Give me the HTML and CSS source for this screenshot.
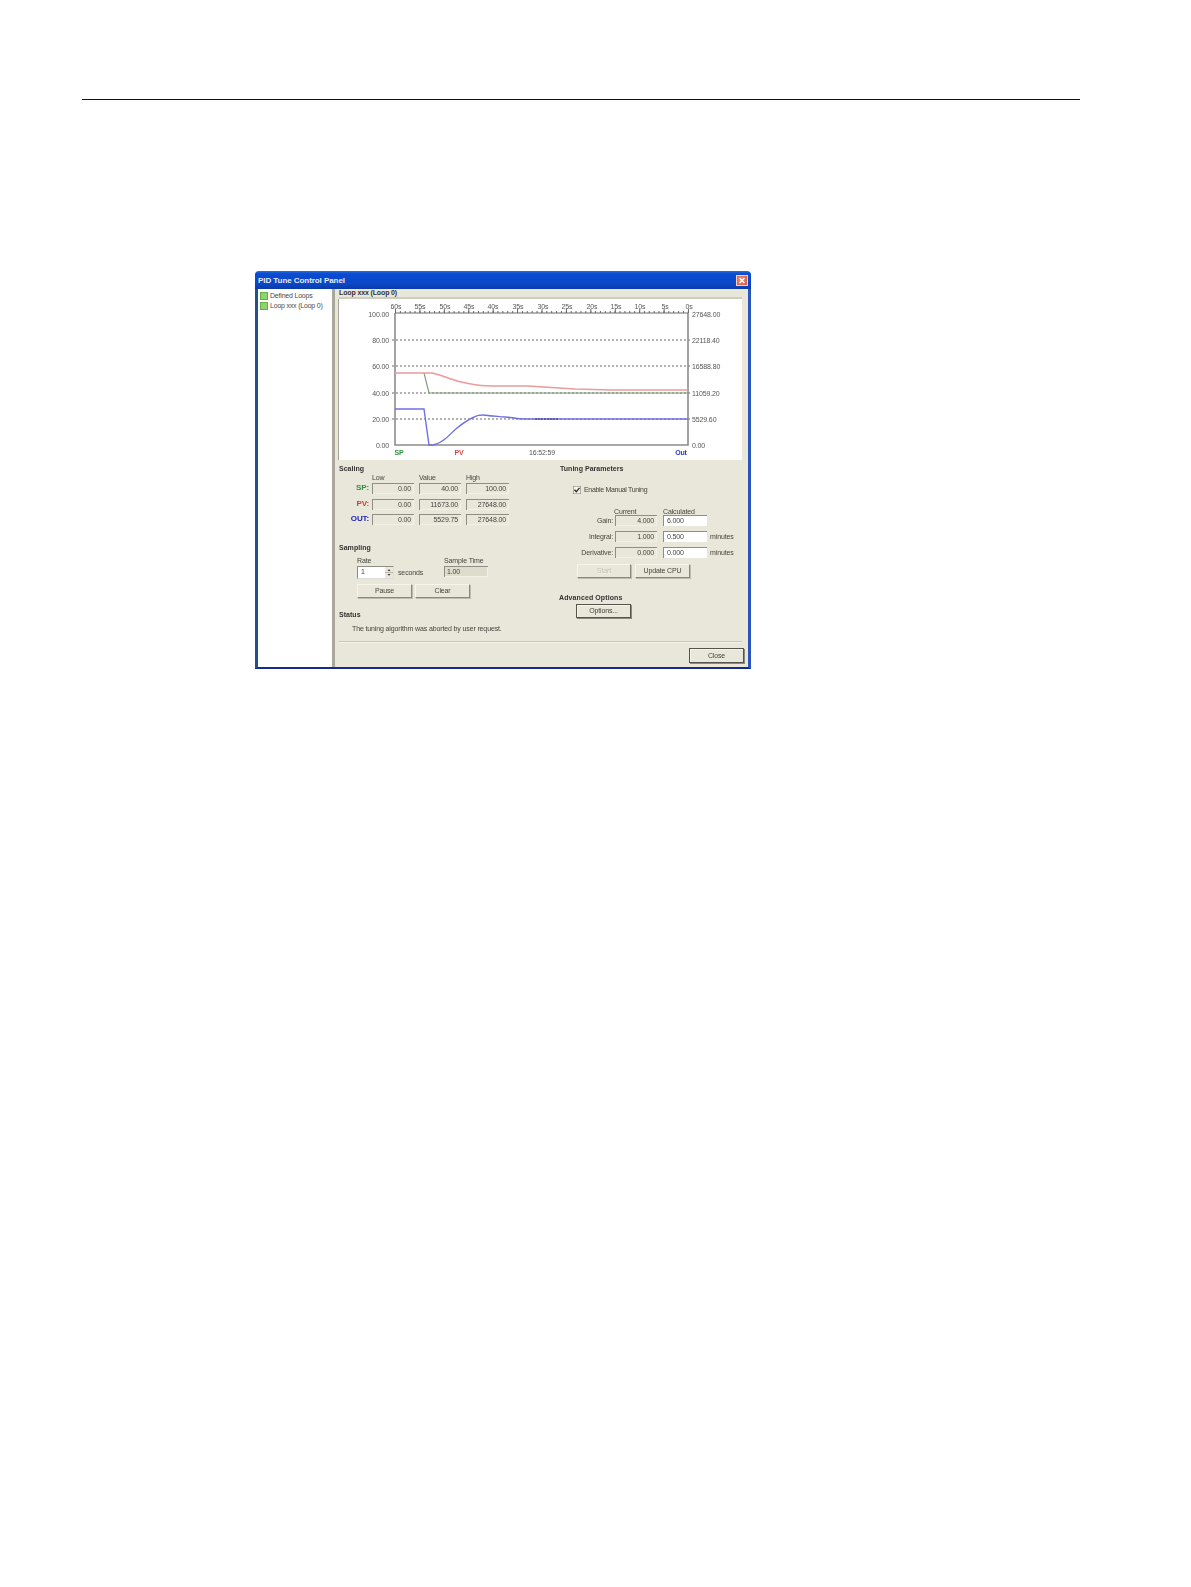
FILE: index.html
```
<!DOCTYPE html>
<html lang="en">
<head>
<meta charset="utf-8">
<title>PID Tune Control Panel</title>
<link rel="stylesheet" href="styles.css">
</head>
<body>
<div class="rule"></div>
<div class="window">
  <div class="titlebar">
    <span class="title-text">PID Tune Control Panel</span>
    <span class="close-x">
      <svg viewBox="0 0 12 11" width="12" height="11"><path d="M3 2.5 9 8.5M9 2.5 3 8.5" stroke="#fff" stroke-width="1.8" fill="none"/></svg>
    </span>
  </div>
  <div class="client">
    <div class="tree">
      <div class="tree-item"><i class="tree-icon"></i><span>Defined Loops</span></div>
      <div class="tree-item"><i class="tree-icon"></i><span>Loop xxx (Loop 0)</span></div>
    </div>
    <div class="main">
      <div class="loop-title">Loop xxx (Loop 0)</div>
      <div class="chart">
        <svg viewBox="0 0 403 161" width="403" height="161">
          <g class="grid-lines">
            <line x1="53" y1="41" x2="352" y2="41"/>
            <line x1="53" y1="67" x2="352" y2="67"/>
            <line x1="53" y1="94" x2="352" y2="94"/>
            <line x1="53" y1="120" x2="352" y2="120"/>
          </g>
          <line class="tick-minor" x1="56" y1="13" x2="349" y2="13"/>
          <line class="tick-major" x1="56" y1="12" x2="350" y2="12"/>
          <path class="axis-sides" d="M56 14V146H349V14"/>
          <path class="axis-top" d="M56 14H349"/>
          <path class="line-sp" d="M85 74 90 94H349"/>
          <path class="line-pv" d="M56 74H93C103 76 110 80 118 82S131 85 138 86 152 87 161 87H189L236 90 273 91H349"/>
          <path class="line-out" d="M56 110H85L90 146H94C99 145 102 143 106 140S113 133 118 129 127 122 133 119 140 116 144 116 150 117 154 117 160 118 166 118 176 120 186 120H349"/>
          <line class="blue-dots" x1="196" y1="120" x2="220" y2="120"/>
          <g class="top-labels">
            <text x="57" y="10">60s</text><text x="81" y="10">55s</text><text x="106" y="10">50s</text>
            <text x="130" y="10">45s</text><text x="154" y="10">40s</text><text x="179" y="10">35s</text>
            <text x="204" y="10">30s</text><text x="228" y="10">25s</text><text x="253" y="10">20s</text>
            <text x="277" y="10">15s</text><text x="301" y="10">10s</text><text x="326" y="10">5s</text>
            <text x="350" y="10">0s</text>
          </g>
          <g class="left-labels">
            <text x="50" y="17.5">100.00</text><text x="50" y="43.5">80.00</text><text x="50" y="69.5">60.00</text>
            <text x="50" y="96.5">40.00</text><text x="50" y="122.5">20.00</text><text x="50" y="148.5">0.00</text>
          </g>
          <g class="right-labels">
            <text x="353" y="17.5">27648.00</text><text x="353" y="43.5">22118.40</text><text x="353" y="69.5">16588.80</text>
            <text x="353" y="96.5">11059.20</text><text x="353" y="122.5">5529.60</text><text x="353" y="148.5">0.00</text>
          </g>
          <text class="legend legend-sp" x="60" y="156">SP</text>
          <text class="legend legend-pv" x="120" y="156">PV</text>
          <text class="legend-time" x="203" y="156">16:52:59</text>
          <text class="legend legend-out" x="342" y="156">Out</text>
        </svg>
      </div>
      <div class="panels">
        <div class="panel-left">
          <div class="section-title">Scaling</div>
          <div class="scale-grid scale-head">
            <span></span><span>Low</span><span>Value</span><span>High</span>
          </div>
          <div class="scale-grid">
            <span class="row-label sp">SP:</span><span class="field">0.00</span><span class="field">40.00</span><span class="field">100.00</span>
            <span class="row-label pv">PV:</span><span class="field">0.00</span><span class="field">11673.00</span><span class="field">27648.00</span>
            <span class="row-label out">OUT:</span><span class="field">0.00</span><span class="field">5529.75</span><span class="field">27648.00</span>
          </div>
          <div class="section-title sampling-title">Sampling</div>
          <div class="sampling">
            <div class="rate-col">
              <div class="small-label">Rate</div>
              <div class="rate-row">
                <div class="spinner">
                  <span class="spinner-value">1</span>
                  <span class="spin-btns">
                    <svg viewBox="0 0 8 11" width="8" height="11"><path d="M0 5.5H8" stroke="#aaa89a" stroke-width=".8"/><path d="M2.5 4 4 2.3 5.5 4ZM2.5 7 4 8.7 5.5 7Z" fill="#333"/></svg>
                  </span>
                </div>
                <span class="seconds">seconds</span>
              </div>
            </div>
            <div class="sample-col">
              <div class="small-label">Sample Time</div>
              <span class="field field-left sample-field">1.00</span>
            </div>
          </div>
          <div class="btn-row sampling-btns">
            <button class="btn btn-55" type="button">Pause</button>
            <button class="btn btn-55" type="button">Clear</button>
          </div>
          <div class="section-title status-title">Status</div>
          <div class="status-msg">The tuning algorithm was aborted by user request.</div>
        </div>
        <div class="panel-right">
          <div class="section-title">Tuning Parameters</div>
          <label class="check-row"><i class="checkbox"><svg viewBox="0 0 8 8" width="8" height="8"><path d="M1.5 3.8 3.3 5.8 6.5 1.8" stroke="#222" stroke-width="1.3" fill="none"/></svg></i><span>Enable Manual Tuning</span></label>
          <div class="tune-grid tune-head">
            <span></span><span>Current</span><span>Calculated</span><span></span>
          </div>
          <div class="tune-grid">
            <span class="tune-label">Gain:</span><span class="field tune-cur">4.000</span><span class="field field-left field-white">6.000</span><span></span>
            <span class="tune-label">Integral:</span><span class="field tune-cur">1.000</span><span class="field field-left field-white">0.500</span><span>minutes</span>
            <span class="tune-label">Derivative:</span><span class="field tune-cur">0.000</span><span class="field field-left field-white">0.000</span><span>minutes</span>
          </div>
          <div class="btn-row tune-btns">
            <button class="btn btn-54 btn-disabled" type="button">Start</button>
            <button class="btn btn-55" type="button">Update CPU</button>
          </div>
          <div class="section-title advanced-title">Advanced Options</div>
          <button class="btn btn-55 btn-default options-btn" type="button">Options...</button>
        </div>
      </div>
      <div class="separator"></div>
      <div class="footer"><button class="btn btn-close btn-default" type="button">Close</button></div>
    </div>
  </div>
</div>
</body>
</html>
```
FILE: styles.css
```
html, body { margin: 0; padding: 0; background: #fff; }
body { height: 1587px; overflow: hidden; font-family: "Liberation Sans", Arial, sans-serif; font-size: 7px; letter-spacing: -.13px; color: #45453f; }

.rule { height: 1.2px; margin: 99px 111px 0 82px; background: #111; }

.window {
  width: 496px; height: 398px; margin: 170.8px 0 0 255px;
  border-radius: 4px 4px 0 0; overflow: hidden; filter: blur(.45px);
  display: flex; flex-direction: column;
}
.titlebar {
  height: 18px; flex: none; display: flex; align-items: center; justify-content: space-between;
  padding: 1px 3px 0 3px; box-sizing: border-box;
  background: linear-gradient(#2a6fe0 0, #0a4bd0 15%, #0a48c8 70%, #0a3aa8 100%);
}
.title-text { color: #e6eaf8; font-size: 8px; font-weight: bold; letter-spacing: -.06px; }
.close-x {
  width: 12px; height: 11px; display: block; line-height: 0; border: .5px solid #f0d0c8;
  background: radial-gradient(circle at 40% 40%, #ec8a70, #d8553f);
  box-sizing: border-box;
}
.close-x svg { display: block; width: 100%; height: 100%; }

.client {
  flex: none; height: 380px; display: flex; box-sizing: border-box;
  border-left: 3px solid #24508f; border-right: 3px solid #2a55c0; border-bottom: 2.5px solid #1a2a8a;
}
.tree {
  flex: none; background: #fff; padding-top: 2px; box-sizing: border-box;
  border-right: 3px solid #a9a89a; width: 77px;
}
.tree-item { height: 10px; display: flex; align-items: center; padding-left: 2px; gap: 2px; color: #4a4a48; white-space: nowrap; letter-spacing: -.2px; }
.tree-icon { width: 6px; height: 6px; flex: none; background: #8ed46e; border: .5px solid #66ae4c; box-sizing: content-box; }

.main { flex: 1; background: #e9e7d9; padding-left: 4px; min-width: 0; display: flex; flex-direction: column; }
.loop-title { height: 10px; line-height: 8px; font-weight: bold; flex: none; color: #333; }
.chart { width: 403px; height: 161px; flex: none; background: #fff; box-shadow: 0 -2px 0 #cfcdbc, -1px 0 0 #a5a498; }
.chart svg { display: block; }

.axis-sides { fill: none; stroke: #8c8c8a; stroke-width: 1.6; }
.axis-top { fill: none; stroke: #6a6a68; stroke-width: 1; }
.grid-lines line { stroke: #555; stroke-width: .9; stroke-dasharray: 2 2; }
.tick-minor { stroke: #666; stroke-width: 2; stroke-dasharray: 1 3.88; }
.tick-major { stroke: #666; stroke-width: 4; stroke-dasharray: 1 23.42; }
.line-sp { fill: none; stroke: #7c9a7c; stroke-width: 1.1; }
.line-pv { fill: none; stroke: #ec9a9a; stroke-width: 1.6; }
.line-out { fill: none; stroke: #7070e4; stroke-width: 1.4; }
.blue-dots { stroke: #33336a; stroke-width: 1; stroke-dasharray: 2 1; }
.chart text { font-size: 7px; fill: #555; }
.top-labels text { text-anchor: middle; }
.left-labels text { text-anchor: end; }
.legend { font-weight: bold; text-anchor: middle; }
.chart .legend-sp { fill: #2f8f3f; }
.chart .legend-pv { fill: #d84a4a; }
.chart .legend-out { fill: #2a38c8; }
.legend-time { text-anchor: middle; }

.panels { height: 181px; flex: none; display: flex; padding-top: 4px; box-sizing: border-box; }
.panel-left { width: 221px; flex: none; }
.panel-right { flex: 1; }
.section-title { height: 10px; line-height: 10px; font-weight: bold; color: #333; white-space: nowrap; letter-spacing: .03px; }

.scale-grid { display: grid; grid-template-columns: 28px 42px 42px 43px; column-gap: 5px; row-gap: 4.5px; }
.scale-head { height: 8px; line-height: 8px; margin-bottom: 1.5px; }
.row-label { font-size: 8px; font-weight: bold; line-height: 10px; text-align: right; margin-right: -2px; }
.sp { color: #2f8f3f; }
.pv { color: #d23a3a; }
.out { color: #2222bb; }

.field {
  display: block; height: 11px; line-height: 10px; box-sizing: border-box; padding: 0 3px; text-align: right;
  background: #e9e7d9; border-style: solid; border-width: 1px 0 0 1px; border-color: #8f8e82; 
  box-shadow: inset -1px -1px 0 #f2f1e6; white-space: nowrap;
}
.field-left { text-align: left; }
.field-white { background: #fff; width: 44px; box-shadow: none; }

.sampling-title { margin-top: 17.5px; }
.sampling { display: flex; margin: 4px 0 0 18px; }
.rate-col { width: 87px; flex: none; }
.small-label { height: 9px; line-height: 8px; white-space: nowrap; }
.rate-row { display: flex; align-items: center; gap: 4px; }
.spinner {
  width: 37px; height: 13px; box-sizing: border-box; background: #fff; display: flex; justify-content: space-between;
  border-style: solid; border-width: 1px 1px 1px 1px; border-color: #8f8e82 #ddd #ddd #8f8e82; 
}
.spinner-value { padding: 0 3px; line-height: 10px; }
.spin-btns { width: 8px; height: 11px; background: #e9e7d9; display: block; line-height: 0; }
.seconds { line-height: 13px; }
.sample-field { width: 44px; padding-left: 2px; background: #dedccd; }

.btn-row { display: flex; }
.btn {
  display: block; height: 14px; padding: 0; margin: 0; box-sizing: border-box;
  font: 7px "Liberation Sans", Arial, sans-serif; letter-spacing: -.13px; color: #45453f; text-align: center;
  background: #e9e7d9; border-style: solid; border-width: 1px; border-color: #f6f5ec #8a897e #8a897e #f6f5ec;
  box-shadow: 1px 1px 0 #bdbbae;
}
.btn-55 { width: 55px; }
.btn-54 { width: 54px; }
.btn-disabled { color: #c2c0b3; text-shadow: .5px .5px 0 #f6f5ec; }
.btn-default { border: 1px solid #55544c; box-shadow: inset 1px 1px 0 #f6f5ec, 1px 1px 0 #8a897e; }
.sampling-btns { margin: 5px 0 0 18px; gap: 3px; }
.status-title { margin-top: 12px; }
.status-msg { margin: 5px 0 0 13px; height: 8px; line-height: 8px; white-space: nowrap; }

.check-row { display: flex; align-items: center; gap: 3px; height: 10px; margin: 11px 0 0 13px; letter-spacing: -.32px; }
.checkbox { width: 8px; height: 8px; display: block; flex: none; line-height: 0; background: #f4f3ea; box-shadow: inset 0 0 0 .6px #7f7e74; }

.tune-grid { display: grid; grid-template-columns: 52px 45px 44px 40px; column-gap: 3px; row-gap: 5px; }
.tune-head { margin-top: 11px; height: 8px; line-height: 8px; margin-bottom: 1px; white-space: nowrap; }
.tune-head span:nth-child(2) { margin-left: -1px; }
.tune-label { text-align: right; line-height: 11px; margin-right: -1px; }
.tune-cur { width: 42px; }
.tune-grid > span:not(.field):not(.tune-label) { line-height: 11px; }

.tune-btns { margin: 6px 0 0 17px; gap: 4px; }
.advanced-title { margin: 15px 0 0 -1px; letter-spacing: .1px; }
.options-btn { margin: 1px 0 0 16px; }

.separator { height: 1px; flex: none; margin-right: 6px; background: #c8c6b8; box-shadow: 0 1px 0 #f4f3ea; }
.footer { flex: 1; display: flex; justify-content: flex-end; padding: 6px 4px 0 0; }
.btn-close { width: 55px; height: 15px; }
```
